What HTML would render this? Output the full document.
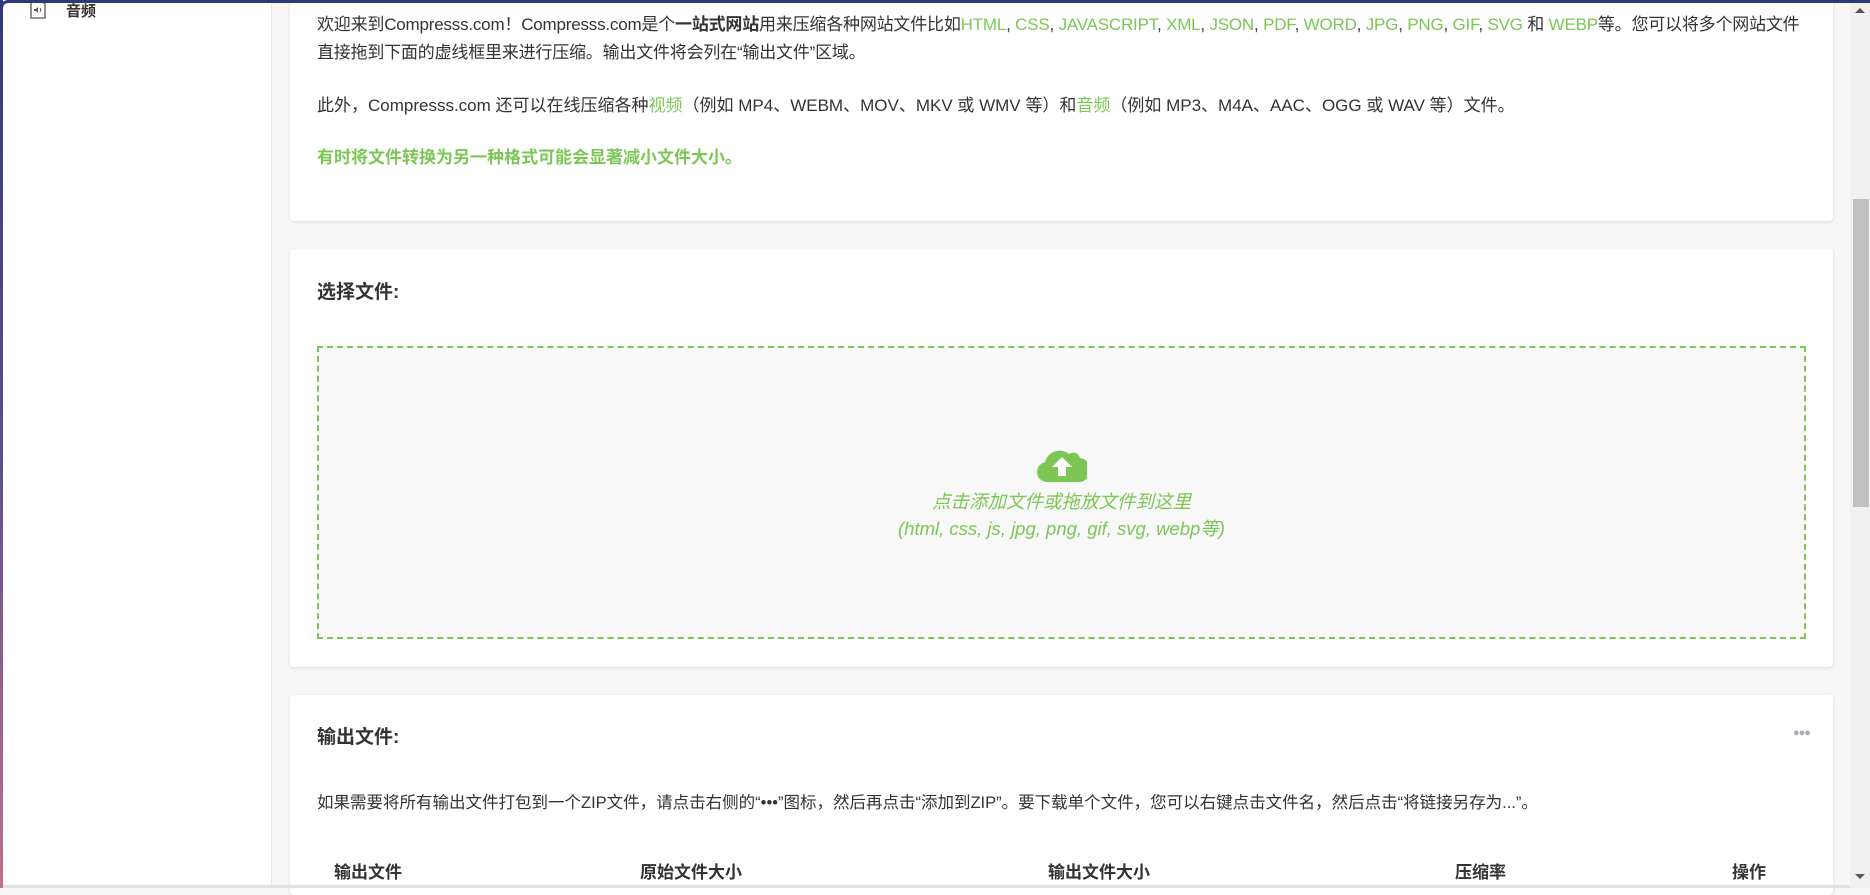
<!DOCTYPE html>
<html><head><meta charset="utf-8"><style>
*{margin:0;padding:0;box-sizing:border-box}
html,body{width:1870px;height:888px;overflow:hidden;background:#f7f7f7;font-family:"Liberation Sans","Noto Sans CJK SC",sans-serif;color:#333}
.frame{position:absolute;left:0;top:0;width:1870px;height:888px;border-top:3px solid #2c3a7a;border-left:3px solid #3a3f86;border-top-left-radius:8px;pointer-events:none;z-index:5}
.lg{position:absolute;left:0;top:0;width:3px;height:888px;background:linear-gradient(#2c3a7a,#5a4e8a 50%,#c07090);z-index:6}
.side{position:absolute;left:0;top:0;width:272px;height:888px;background:#fff;border-right:1px solid #e8e8e8}
.side .it{position:absolute;left:66px;top:0;font-size:15px;font-weight:bold;color:#333}
.card{position:absolute;left:290px;width:1543px;background:#fff;border-radius:4px;box-shadow:0 1px 3px rgba(0,0,0,.12)}
p{font-size:17px;line-height:28px;position:absolute;left:27px}
.g{color:#7cc656}
h3{position:absolute;left:27px;font-size:19px;font-weight:bold;color:#333}
.drop{position:absolute;left:27px;top:97px;width:1489px;height:293px;border:2px dashed #7cc656;background:#f8f8f8;text-align:center}
.dt{position:absolute;left:0;width:100%;font-style:italic;color:#7cc656;font-size:18.5px}
.sb{position:absolute;right:0;top:0;width:20px;height:888px;background:#f0f0f0}
.th{position:absolute;font-size:17px;font-weight:bold;top:163px}
</style></head><body>
<div class="side">
<svg style="position:absolute;left:30px;top:0" width="16" height="19" viewBox="0 0 16 19"><path d="M1 0V18H15V4L11 0" fill="none" stroke="#555" stroke-width="1.3"/><path d="M4 9h2l2-2v6l-2-2H4z" fill="#555"/><path d="M10 8q1.5 2 0 4" stroke="#555" fill="none"/></svg>
<div class="it">音频</div>
</div>
<div class="card" style="top:-10px;height:231px">
<p style="top:21px;width:1520px;white-space:nowrap;letter-spacing:-0.2px">欢迎来到Compresss.com！Compresss.com是个<b>一站式网站</b>用来压缩各种网站文件比如<span class="g">HTML</span>, <span class="g">CSS</span>, <span class="g">JAVASCRIPT</span>, <span class="g">XML</span>, <span class="g">JSON</span>, <span class="g">PDF</span>, <span class="g">WORD</span>, <span class="g">JPG</span>, <span class="g">PNG</span>, <span class="g">GIF</span>, <span class="g">SVG</span> 和 <span class="g">WEBP</span>等。您可以将多个网站文件<br>直接拖到下面的虚线框里来进行压缩。输出文件将会列在“输出文件”区域。</p>
<p style="top:102px;white-space:nowrap">此外，Compresss.com 还可以在线压缩各种<span class="g">视频</span>（例如 MP4、WEBM、MOV、MKV 或 WMV 等）和<span class="g">音频</span>（例如 MP3、M4A、AAC、OGG 或 WAV 等）文件。</p>
<p style="top:154px;font-weight:bold" class="g">有时将文件转换为另一种格式可能会显著减小文件大小。</p>
</div>
<div class="card" style="top:249px;height:418px">
<h3 style="top:28px">选择文件:</h3>
<div class="drop">
<svg style="position:absolute;left:718px;top:100px" width="50" height="34" viewBox="0 0 50 34"><path d="M10 34a10 10 0 0 1-2-19.8A15 15 0 0 1 32 6a7 7 0 0 1 11 4 12 12 0 0 1-3 24z" fill="#7cc656"/><path d="M25 9l-10 10h6v9h8v-9h6z" fill="#fff"/></svg>
<div class="dt" style="top:140px">点击添加文件或拖放文件到这里</div>
<div class="dt" style="top:167px">(html, css, js, jpg, png, gif, svg, webp等)</div>
</div>
</div>
<div class="card" style="top:695px;height:200px">
<h3 style="top:27px">输出文件:</h3>
<div style="position:absolute;left:1503px;top:32px;color:#aab;font-size:11px;letter-spacing:-1px">●●●</div>
<p style="top:94px;white-space:nowrap;font-size:16.5px">如果需要将所有输出文件打包到一个ZIP文件，请点击右侧的“•••”图标，然后再点击“添加到ZIP”。要下载单个文件，您可以右键点击文件名，然后点击“将链接另存为...”。</p>
<div class="th" style="left:44px">输出文件</div>
<div class="th" style="left:350px">原始文件大小</div>
<div class="th" style="left:758px">输出文件大小</div>
<div class="th" style="left:1165px">压缩率</div>
<div class="th" style="left:1442px">操作</div>
</div>
<div class="sb"><div style="position:absolute;left:3px;top:199px;width:16px;height:308px;background:#c1c1c1"></div>
<div style="position:absolute;left:5px;top:8px;border:5px solid transparent;border-bottom-color:#555;border-top:0"></div>
<div style="position:absolute;left:5px;top:874px;border:5px solid transparent;border-top-color:#555;border-bottom:0"></div></div>
<div style="position:absolute;left:0;top:885px;width:1850px;height:3px;background:#dde4e0"></div>
<div class="lg"></div><div class="frame"></div>
</body></html>
